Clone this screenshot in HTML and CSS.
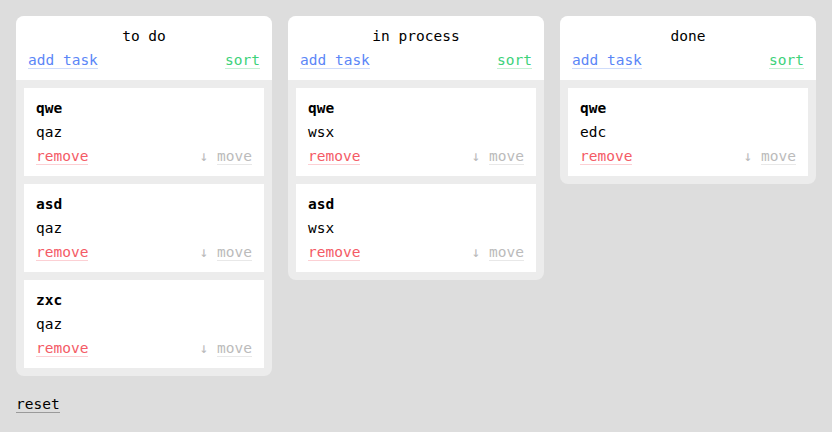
FILE: index.html
```html
<!DOCTYPE html>
<html>
<head>
<meta charset="utf-8">
<link rel="stylesheet" href="styles.css">
</head>
<body>
<div class="board">
  <section class="column">
    <header class="col-head">
      <div class="col-title">to do</div>
      <div class="col-actions"><span><a class="link add">add task</a></span><span><a class="link sort">sort</a></span></div>
    </header>
    <div class="cards">
      <div class="card"><div class="card-title">qwe</div><div class="card-body">qaz</div><div class="card-actions"><span><a class="link remove">remove</a></span><span><span class="arrow">↓</span> <a class="link move">move</a></span></div></div>
      <div class="card"><div class="card-title">asd</div><div class="card-body">qaz</div><div class="card-actions"><span><a class="link remove">remove</a></span><span><span class="arrow">↓</span> <a class="link move">move</a></span></div></div>
      <div class="card"><div class="card-title">zxc</div><div class="card-body">qaz</div><div class="card-actions"><span><a class="link remove">remove</a></span><span><span class="arrow">↓</span> <a class="link move">move</a></span></div></div>
    </div>
  </section>
  <section class="column">
    <header class="col-head">
      <div class="col-title">in process</div>
      <div class="col-actions"><span><a class="link add">add task</a></span><span><a class="link sort">sort</a></span></div>
    </header>
    <div class="cards">
      <div class="card"><div class="card-title">qwe</div><div class="card-body">wsx</div><div class="card-actions"><span><a class="link remove">remove</a></span><span><span class="arrow">↓</span> <a class="link move">move</a></span></div></div>
      <div class="card"><div class="card-title">asd</div><div class="card-body">wsx</div><div class="card-actions"><span><a class="link remove">remove</a></span><span><span class="arrow">↓</span> <a class="link move">move</a></span></div></div>
    </div>
  </section>
  <section class="column">
    <header class="col-head">
      <div class="col-title">done</div>
      <div class="col-actions"><span><a class="link add">add task</a></span><span><a class="link sort">sort</a></span></div>
    </header>
    <div class="cards">
      <div class="card"><div class="card-title">qwe</div><div class="card-body">edc</div><div class="card-actions"><span><a class="link remove">remove</a></span><span><span class="arrow">↓</span> <a class="link move">move</a></span></div></div>
    </div>
  </section>
</div>
<div class="footer"><a class="link reset">reset</a></div>
</body>
</html>
```
FILE: styles.css
```css
html, body { margin: 0; padding: 0; }
body {
  background: #dddddd;
  font-family: "DejaVu Sans Mono", monospace;
  font-size: 14.5px;
  line-height: 24px;
  color: #000;
  padding: 16px;
}
.board {
  display: flex;
  gap: 16px;
  align-items: flex-start;
}
.column {
  width: 256px;
  background: #ececec;
  border-radius: 8px;
  overflow: hidden;
}
.col-head {
  background: #fff;
  padding: 8px 12px;
}
.col-title { text-align: center; }
.col-actions {
  display: flex;
  justify-content: space-between;
}
.cards {
  padding: 8px;
  display: flex;
  flex-direction: column;
  gap: 8px;
}
.card {
  background: #fff;
  padding: 8px 12px;
}
.card-title { font-weight: bold; }
.card-actions {
  display: flex;
  justify-content: space-between;
}
.link {
  cursor: pointer;
  border-bottom: 1px solid;
}
.add { color: #5b86f7; border-color: #cfdcfb; }
.sort { color: #3dd27a; border-color: #c6f0d4; }
.remove { color: #f45a66; border-color: #fcd0d4; }
.move { color: #bbbbbb; border-color: #e8e8e8; }
.arrow { color: #bbbbbb; }
.footer { margin-top: 16px; }
.reset { color: #000; border-color: #9a9a9a; }
```
